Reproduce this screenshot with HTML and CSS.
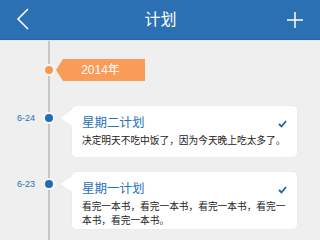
FILE: index.html
```html
<!DOCTYPE html>
<html lang="zh">
<head>
<meta charset="utf-8">
<link rel="stylesheet" href="styles.css">
</head>
<body>
<div class="app">
  <header class="bar">
    <svg class="back" width="14" height="24" viewBox="0 0 14 24"><path d="M12 2 L2 12 L12 22" fill="none" stroke="#fff" stroke-width="1.6"/></svg>
    <h1 class="title">计划</h1>
    <svg class="add" width="16" height="16" viewBox="0 0 16 16"><path d="M8 0 V16 M0 8 H16" stroke="#fff" stroke-width="1.5"/></svg>
  </header>
  <main class="timeline">
    <div class="row year-row">
      <div class="marker"><span class="date"></span><span class="dot dot-orange"></span></div>
      <div class="tag">2014年</div>
    </div>
    <div class="row plan-row">
      <div class="marker"><span class="date">6-24</span><span class="dot"></span></div>
      <div class="card card-one">
        <div class="card-head"><span class="card-title">星期二计划</span><svg class="check" width="9" height="8" viewBox="0 0 9 8"><path d="M1 4 L3.5 6.5 L8 1" fill="none" stroke="#1d63ad" stroke-width="1.8"/></svg></div>
        <p class="card-text">决定明天不吃中饭了，因为今天晚上吃太多了。</p>
      </div>
    </div>
    <div class="row plan-row">
      <div class="marker"><span class="date">6-23</span><span class="dot"></span></div>
      <div class="card">
        <div class="card-head"><span class="card-title">星期一计划</span><svg class="check" width="9" height="8" viewBox="0 0 9 8"><path d="M1 4 L3.5 6.5 L8 1" fill="none" stroke="#1d63ad" stroke-width="1.8"/></svg></div>
        <p class="card-text">看完一本书，看完一本书，看完一本书，看完一本书，看完一本书。</p>
      </div>
    </div>
  </main>
</div>
</body>
</html>
```
FILE: styles.css
```css
* { box-sizing: border-box; }
html, body { margin: 0; padding: 0; }
body {
  width: 320px;
  height: 240px;
  overflow: hidden;
  background: #efefef;
  font-family: "Noto Sans CJK SC", "Liberation Sans", sans-serif;
}
.app { width: 320px; height: 240px; display: flex; flex-direction: column; overflow: hidden; }
.bar {
  height: 40px;
  flex: none;
  background: #2a70b2;
  border-bottom: 1px solid #2565a3;
  display: flex;
  align-items: center;
  justify-content: space-between;
  padding: 0 17px 0 16px;
}
.back { display: block; margin-top: -2px; }
.add { display: block; margin-top: 0; }
.title {
  margin: 0;
  color: #fff;
  font-size: 16px;
  font-weight: normal;
  line-height: 20px;
  margin-top: -3px;
  padding-left: 4px;
}
.timeline {
  flex: 1;
  position: relative;
  padding-top: 17px;
  border-top: 1px solid #e6e6e6;
}
.timeline::before {
  content: "";
  position: absolute;
  left: 48px;
  top: 0;
  bottom: 0;
  width: 2px;
  background: #c6c6c8;
}
.row { display: flex; position: relative; }
.year-row { align-items: center; margin-bottom: 24px; }
.plan-row { align-items: flex-start; margin-bottom: 15px; }
.marker {
  width: 55px;
  height: 24px;
  flex: none;
  display: flex;
  align-items: center;
}
.date {
  width: 43px;
  padding-right: 8px;
  text-align: right;
  font-family: "Liberation Sans", sans-serif;
  font-size: 9px;
  color: #2a6fb0;
}
.dot {
  width: 12px;
  height: 12px;
  border-radius: 50%;
  background: #1e6cb3;
  border: 2px solid #f6f6f6;
  position: relative;
  z-index: 1;
}
.dot-orange { background: #f7984f; }
.tag {
  position: relative;
  margin-left: 8px;
  width: 82px;
  height: 22px;
  background: #f89c58;
  color: #fff;
  font-family: "Liberation Sans", "Noto Sans CJK SC", sans-serif;
  font-size: 12px;
  line-height: 22px;
  text-align: center;
  padding-right: 7px;
}
.tag::before {
  content: "";
  position: absolute;
  left: -7px;
  top: 0;
  border-right: 7px solid #f89c58;
  border-top: 11px solid transparent;
  border-bottom: 11px solid transparent;
}
.card {
  position: relative;
  margin-left: 17px;
  width: 225px;
  background: #fff;
  border-radius: 4px;
  box-shadow: 0 0 1px rgba(0,0,0,0.15);
  padding: 7px 10px 2px;
}
.card-one { min-height: 51px; }
.card::before {
  content: "";
  position: absolute;
  left: -11px;
  top: 4px;
  border-right: 11px solid #fff;
  border-top: 8px solid transparent;
  border-bottom: 8px solid transparent;
}
.card-head {
  display: flex;
  justify-content: space-between;
  align-items: center;
  height: 18px;
}
.card-title {
  color: #2a70b4;
  font-size: 12.5px;
  line-height: 18px;
}
.check { display: block; margin-top: 4px; margin-right: 0; }
.card-text {
  margin: 2px 0 0;
  font-size: 9.7px;
  line-height: 14px;
  color: #222;
}
```
